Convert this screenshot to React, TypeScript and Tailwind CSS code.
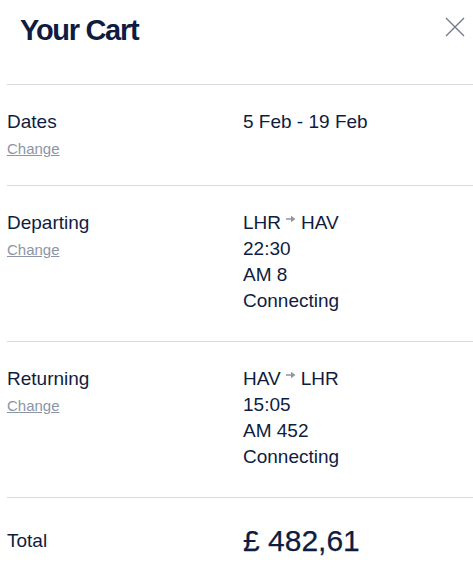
// Cart summary panel
type Row = {
  label: string;
  lines: React.ReactNode[];
};

function Arrow() {
  return (
    <svg
      width="10"
      height="8"
      viewBox="0 0 10 8"
      className="mx-[5px] inline-block -translate-y-[5px]"
    >
      <path d="M0 4h7" stroke="#8d95a6" strokeWidth="1.5" />
      <path d="M5 0.8 L9.5 4 L5 7.2 Z" fill="#8d95a6" />
    </svg>
  );
}

function CloseIcon() {
  return (
    <svg width="20" height="20" viewBox="0 0 20 20" fill="none">
      <path d="M1 1 L19 19 M19 1 L1 19" stroke="#6f7888" strokeWidth="1.3" />
    </svg>
  );
}

const rows: Row[] = [
  { label: "Dates", lines: ["5 Feb - 19 Feb"] },
  {
    label: "Departing",
    lines: [
      <>
        LHR
        <Arrow />
        HAV
      </>,
      "22:30",
      "AM 8",
      "Connecting",
    ],
  },
  {
    label: "Returning",
    lines: [
      <>
        HAV
        <Arrow />
        LHR
      </>,
      "15:05",
      "AM 452",
      "Connecting",
    ],
  },
];

function Divider() {
  return <div className="h-px bg-[#d7dae1] ml-[7px]" />;
}

export default function App() {
  return (
    <div
      className="w-[473px] h-[576px] bg-white text-[#0f1c3f] overflow-hidden"
      style={{ fontFamily: '"Liberation Sans", Arial, sans-serif' }}
    >
      {/* Header */}
      <div className="flex items-start justify-between pl-[20px] pr-2 pt-[14px] pb-[38px]">
        <h1 className="text-[29px] leading-[32px] font-bold tracking-[-0.045em]">
          Your Cart
        </h1>
        <button className="mt-[3px]">
          <CloseIcon />
        </button>
      </div>
      <Divider />

      {rows.map((row) => (
        <div key={row.label}>
          <div className="flex pl-[7px] pt-6 pb-[27px]">
            <div className="w-[236px]">
              <div className="text-[19px] leading-[26px]">{row.label}</div>
              <a
                href="#"
                className="block mt-[5px] text-[15px] leading-[18px] text-[#8c95a8] underline"
              >
                Change
              </a>
            </div>
            <div className="text-[19px] leading-[26px]">
              {row.lines.map((line, i) => (
                <div key={i}>{line}</div>
              ))}
            </div>
          </div>
          <Divider />
        </div>
      ))}

      {/* Total */}
      <div className="flex items-center pl-[7px] pt-[25px]">
        <div className="w-[236px] text-[19px] leading-[26px]">Total</div>
        <div className="text-[30px] leading-[36px] [-webkit-text-stroke:0.25px_#0f1c3f]">
          £ 482,61
        </div>
      </div>
    </div>
  );
}
